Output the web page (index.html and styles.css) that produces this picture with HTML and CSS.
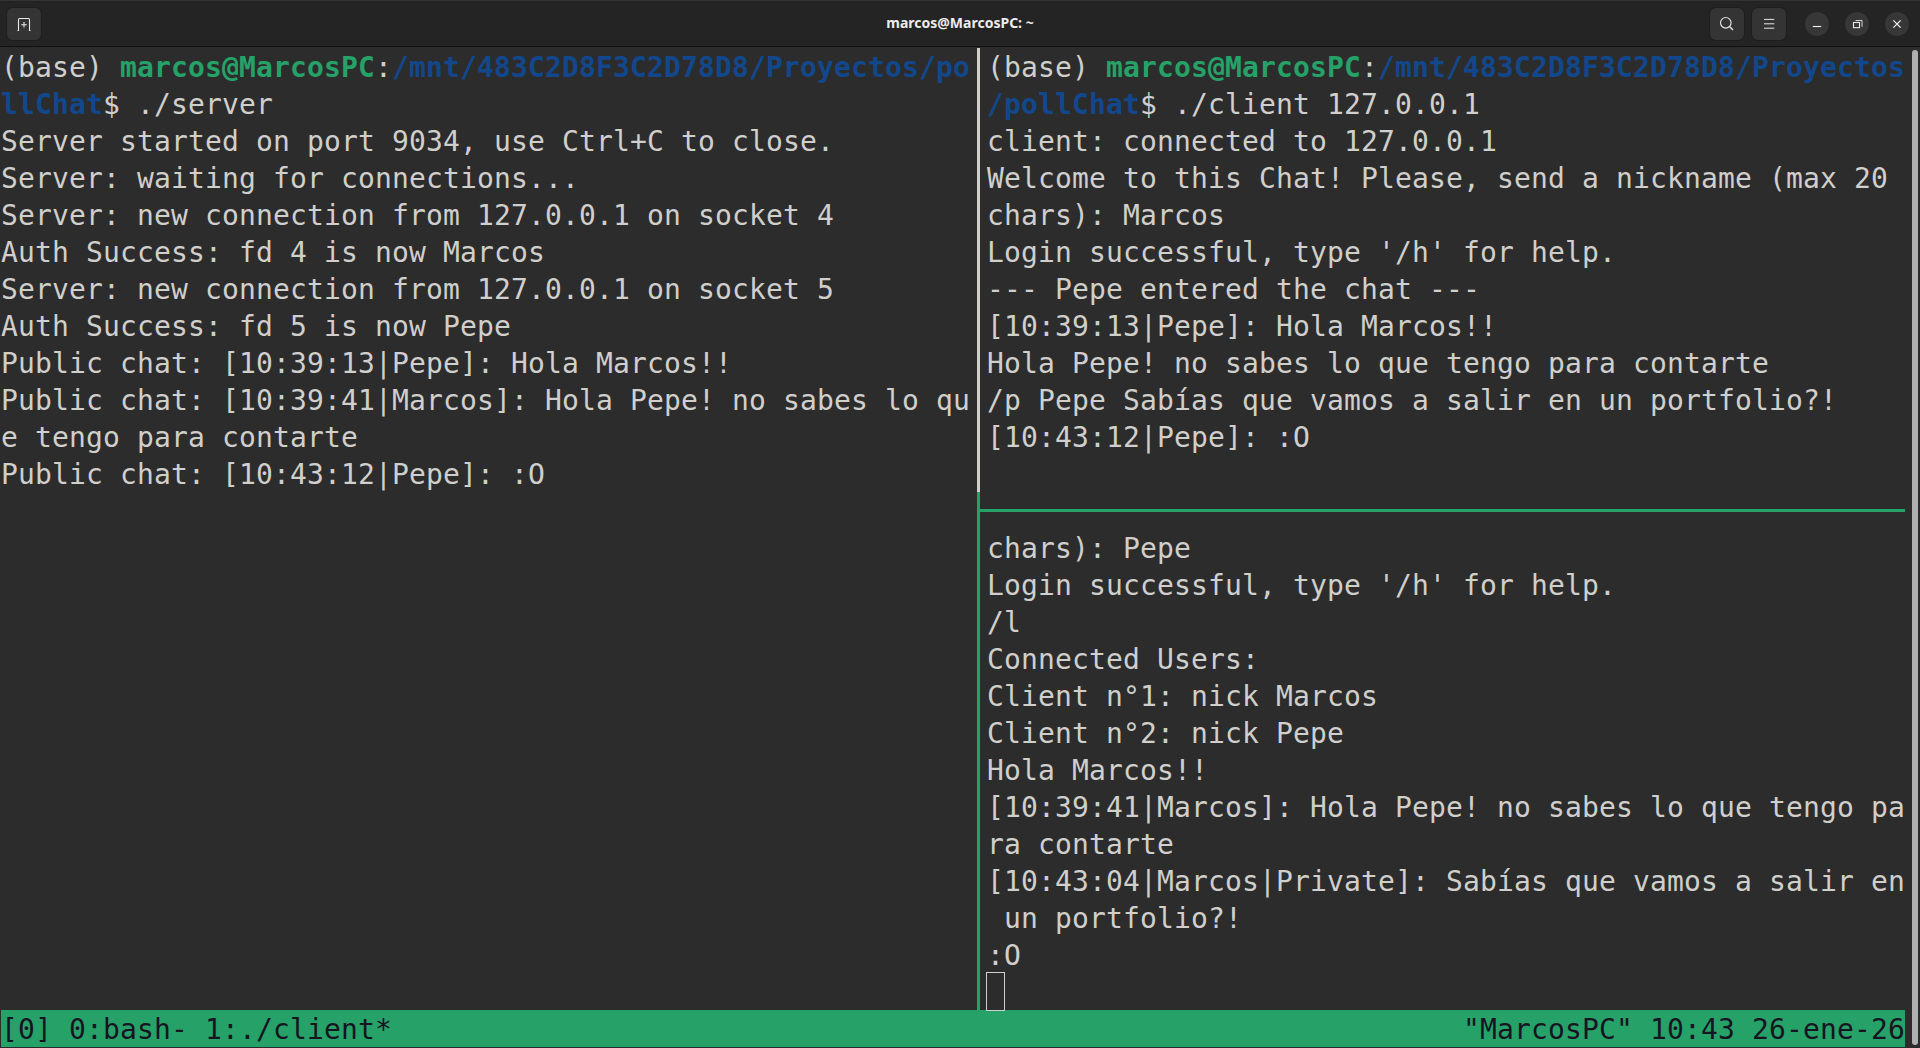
FILE: index.html
```html
<!DOCTYPE html>
<html lang="es">
<head>
<meta charset="utf-8">
<title>marcos@MarcosPC: ~</title>
<link rel="stylesheet" href="styles.css">
</head>
<body>
<div class="window">
  <header class="titlebar">
    <button class="btn newtab" aria-label="Nueva pestaña">
      <svg width="16" height="16" viewBox="0 0 16 16" fill="none" stroke="#e8e8e8" stroke-width="1.1"><path d="M1.5 14.5h1V3.5q0-1 1-1h9q1 0 1 1v11h1M8 6v5.5M5.2 8.7h5.6"/></svg>
    </button>
    <div class="title">marcos@MarcosPC: ~</div>
    <div class="actions">
      <button class="btn" aria-label="Buscar">
        <svg width="16" height="16" viewBox="0 0 16 16" fill="none" stroke="#e0e0e0" stroke-width="1.2"><circle cx="6.8" cy="6.8" r="5.3"/><path d="M10.8 10.8l3.2 3.2" stroke-width="1.5"/></svg>
      </button>
      <button class="btn" aria-label="Menú">
        <svg width="16" height="16" viewBox="0 0 16 16" fill="none" stroke="#e8e8e8" stroke-width="1"><path d="M3 3.4h10.3M3 7.8h10.3M3 12.2h10.3"/></svg>
      </button>
      <div class="winctl">
        <button class="round" aria-label="Minimizar">
          <svg width="16" height="16" viewBox="0 0 16 16" fill="none" stroke="#f0f0f0" stroke-width="1.1"><path d="M3.8 10.5h8.4"/></svg>
        </button>
        <button class="round" aria-label="Restaurar">
          <svg width="16" height="16" viewBox="0 0 16 16" fill="none" stroke="#e8e8e8" stroke-width="1.1"><rect x="4.5" y="6.5" width="6" height="5.2"/><path d="M6.5 4.5h6.5v6.2" stroke-width="0.9"/></svg>
        </button>
        <button class="round" aria-label="Cerrar">
          <svg width="16" height="16" viewBox="0 0 16 16" fill="none" stroke="#f0f0f0" stroke-width="1.3"><path d="M4.4 4.4l7.2 7.2M11.6 4.4l-7.2 7.2"/></svg>
        </button>
      </div>
    </div>
  </header>
  <div class="content">
    <main class="tmux">
      <div class="panes">
        <section class="pane left">
          <div class="row">(base) <b class="g">marcos@MarcosPC</b>:<b class="b">/mnt/483C2D8F3C2D78D8/Proyectos/po</b></div>
          <div class="row"><b class="b">llChat</b>$ ./server</div>
          <div class="row">Server started on port 9034, use Ctrl+C to close.</div>
          <div class="row">Server: waiting for connections...</div>
          <div class="row">Server: new connection from 127.0.0.1 on socket 4</div>
          <div class="row">Auth Success: fd 4 is now Marcos</div>
          <div class="row">Server: new connection from 127.0.0.1 on socket 5</div>
          <div class="row">Auth Success: fd 5 is now Pepe</div>
          <div class="row">Public chat: [10:39:13|Pepe]: Hola Marcos!!</div>
          <div class="row">Public chat: [10:39:41|Marcos]: Hola Pepe! no sabes lo qu</div>
          <div class="row">e tengo para contarte</div>
          <div class="row">Public chat: [10:43:12|Pepe]: :O</div>
        </section>
        <div class="vline top"></div>
        <div class="vline bottom"></div>
        <div class="hline"></div>
        <section class="pane upper">
          <div class="row">(base) <b class="g">marcos@MarcosPC</b>:<b class="b">/mnt/483C2D8F3C2D78D8/Proyectos</b></div>
          <div class="row"><b class="b">/pollChat</b>$ ./client 127.0.0.1</div>
          <div class="row">client: connected to 127.0.0.1</div>
          <div class="row">Welcome to this Chat! Please, send a nickname (max 20</div>
          <div class="row">chars): Marcos</div>
          <div class="row">Login successful, type '/h' for help.</div>
          <div class="row">--- Pepe entered the chat ---</div>
          <div class="row">[10:39:13|Pepe]: Hola Marcos!!</div>
          <div class="row">Hola Pepe! no sabes lo que tengo para contarte</div>
          <div class="row">/p Pepe Sabías que vamos a salir en un portfolio?!</div>
          <div class="row">[10:43:12|Pepe]: :O</div>
        </section>
        <section class="pane lower">
          <div class="row">chars): Pepe</div>
          <div class="row">Login successful, type '/h' for help.</div>
          <div class="row">/l</div>
          <div class="row">Connected Users:</div>
          <div class="row">Client n°1: nick Marcos</div>
          <div class="row">Client n°2: nick Pepe</div>
          <div class="row">Hola Marcos!!</div>
          <div class="row">[10:39:41|Marcos]: Hola Pepe! no sabes lo que tengo pa</div>
          <div class="row">ra contarte</div>
          <div class="row">[10:43:04|Marcos|Private]: Sabías que vamos a salir en</div>
          <div class="row"> un portfolio?!</div>
          <div class="row">:O</div>
          <div class="row"><span class="cursor"></span></div>
        </section>
      </div>
      <footer class="status">
        <span>[0] 0:bash- 1:./client*</span>
        <span>"MarcosPC" 10:43 26-ene-26</span>
      </footer>
    </main>
    <div class="scrollbar"><div class="thumb"></div></div>
  </div>
</div>
</body>
</html>
```

FILE: styles.css
```css
* { box-sizing: border-box; }
html, body { margin: 0; height: 100%; background: #2c2c2c; }
.window { height: 1048px; display: flex; flex-direction: column; overflow: hidden; }

.titlebar {
  height: 47px; flex: none; display: flex; align-items: center; justify-content: space-between;
  padding: 0 7px; background: #242424;
  border-top: 1px solid #333; border-bottom: 1px solid #111;
  position: relative;
}
.title {
  position: absolute; left: 0; right: 0; top: 0; text-align: center;
  font: 700 14px/43px "Noto Sans", sans-serif; color: #ececec;
}
.btn {
  width: 34px; height: 32px; padding: 0; border: 0; border-radius: 6px; background: #343434;
  display: flex; align-items: center; justify-content: center; box-shadow: 0 0 0 1px #1e1e1e;
}
.actions { display: flex; align-items: center; gap: 8px; position: relative; }
.winctl { display: flex; gap: 16px; margin-left: 11px; margin-right: 4px; }
.round {
  width: 24px; height: 24px; padding: 0; border: 0; border-radius: 50%; background: #373737;
  display: flex; align-items: center; justify-content: center;
}

.content { flex: 1; display: flex; min-height: 0; background: #2c2c2c; }
.tmux {
  width: 1904px; margin-left: 1px; flex: none; display: flex; flex-direction: column;
  font: 28px/39px "DejaVu Sans Mono", "Liberation Mono", monospace;
  letter-spacing: 0.144px; color: #d0cfcc;
}
.panes {
  height: 962px; flex: none; margin-top: 1px; display: grid;
  grid-template-columns: 969px 7px 3px 7px 1fr;
  grid-template-rows: 444px 37px 481px;
}
.pane { min-width: 0; }
.left { grid-column: 1; grid-row: 1 / 4; }
.upper { grid-column: 5; grid-row: 1; }
.lower { grid-column: 5; grid-row: 3; }
.vline.top { grid-column: 3; grid-row: 1; background: #d0cfcc; }
.vline.bottom { grid-column: 3; grid-row: 2 / 4; background: #26a269; }
.hline { grid-column: 4 / 6; grid-row: 2; align-self: center; height: 3px; background: #26a269; }
.row { height: 37px; white-space: pre; }
.g { color: #26a269; font-weight: 700; }
.b { color: #12488b; font-weight: 700; }
.cursor {
  display: block; position: relative; z-index: 1; width: 19px; height: 39px; margin: -1px 0 0 -1px;
  border: 1px solid #d0cfcc;
}
.status {
  height: 37px; flex: none; display: flex; justify-content: space-between;
  background: #26a269; color: #171421; white-space: pre;
}
.scrollbar { flex: 1; position: relative; }
.thumb {
  position: absolute; left: 7px; top: 3px; bottom: 3px; width: 6px; border-radius: 3px; background: #b0b0b0;
}
```
